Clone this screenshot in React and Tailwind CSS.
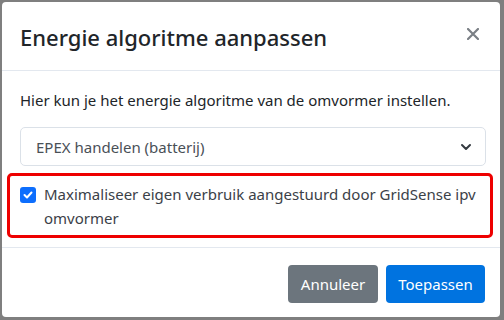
export default function App() {
  return (
    <div
      className="w-[504px] h-[320px] bg-[#7f7f7f] pt-[2px] pl-[2px] pr-[4px] pb-[3px]"
      style={{ fontFamily: '"Noto Sans", "Open Sans", sans-serif' }}
    >
      <div className="w-[498px] h-[315px] bg-white rounded-[4px] flex flex-col text-[#212529]">
        <div className="flex items-center justify-between h-[69px] pl-[18px] pr-[18px] border-b border-[#e3e8ef]">
          <h5 className="text-[22px] leading-[30px] font-medium mt-[1px]">Energie algoritme aanpassen</h5>
          <svg width="12" height="12" viewBox="0 0 12 12" className="mr-[3px] mb-[4px]">
            <path d="M1 1L11 11M11 1L1 11" stroke="#7a7f85" strokeWidth="2.2" strokeLinecap="round" />
          </svg>
        </div>
        <div className="flex flex-col pl-[18px] pr-[14px] pt-[17px] pb-[9px] border-b border-[#e3e8ef]">
          <p className="text-[15px] leading-[24px]">Hier kun je het energie algoritme van de omvormer instellen.</p>
          <div className="mt-[15px] h-[39px] border border-[#dbe1e8] rounded-[5px] flex items-center justify-between pl-[15px] pr-[13px] text-[#495057]">
            <span className="text-[15px] leading-[24px]">EPEX handelen (batterij)</span>
            <svg width="12" height="8" viewBox="0 0 12 8">
              <path d="M2 2L6 6L10 2" stroke="#343a40" strokeWidth="2" fill="none" strokeLinecap="round" strokeLinejoin="round" />
            </svg>
          </div>
          <div className="mt-[7px] -ml-[13px] -mr-[7px] border-[3px] border-[#ee0000] rounded-[5px] flex items-start pl-[10px] pt-[6px] pb-[5px] pr-[8px]">
            <div className="mt-[5px] w-[16px] h-[16px] shrink-0 rounded-[3px] bg-[#0d6efd] flex items-center justify-center">
              <svg width="10" height="8" viewBox="0 0 10 8">
                <path d="M1.5 4L4 6.5L8.5 1.5" stroke="white" strokeWidth="2" fill="none" strokeLinecap="round" strokeLinejoin="round" />
              </svg>
            </div>
            <span className="ml-[8px] text-[15px] leading-[24px] text-[#3b4148]">
              Maximaliseer eigen verbruik aangestuurd door GridSense ipv omvormer
            </span>
          </div>
        </div>
        <div className="flex justify-end items-start gap-[8px] pt-[17px] pr-[15px]">
          <button className="h-[38px] w-[90px] rounded-[4px] bg-[#6c757d] text-white text-[15px]">Annuleer</button>
          <button className="h-[38px] w-[99px] rounded-[4px] bg-[#0073e0] text-white text-[15px]">Toepassen</button>
        </div>
      </div>
    </div>
  );
}
